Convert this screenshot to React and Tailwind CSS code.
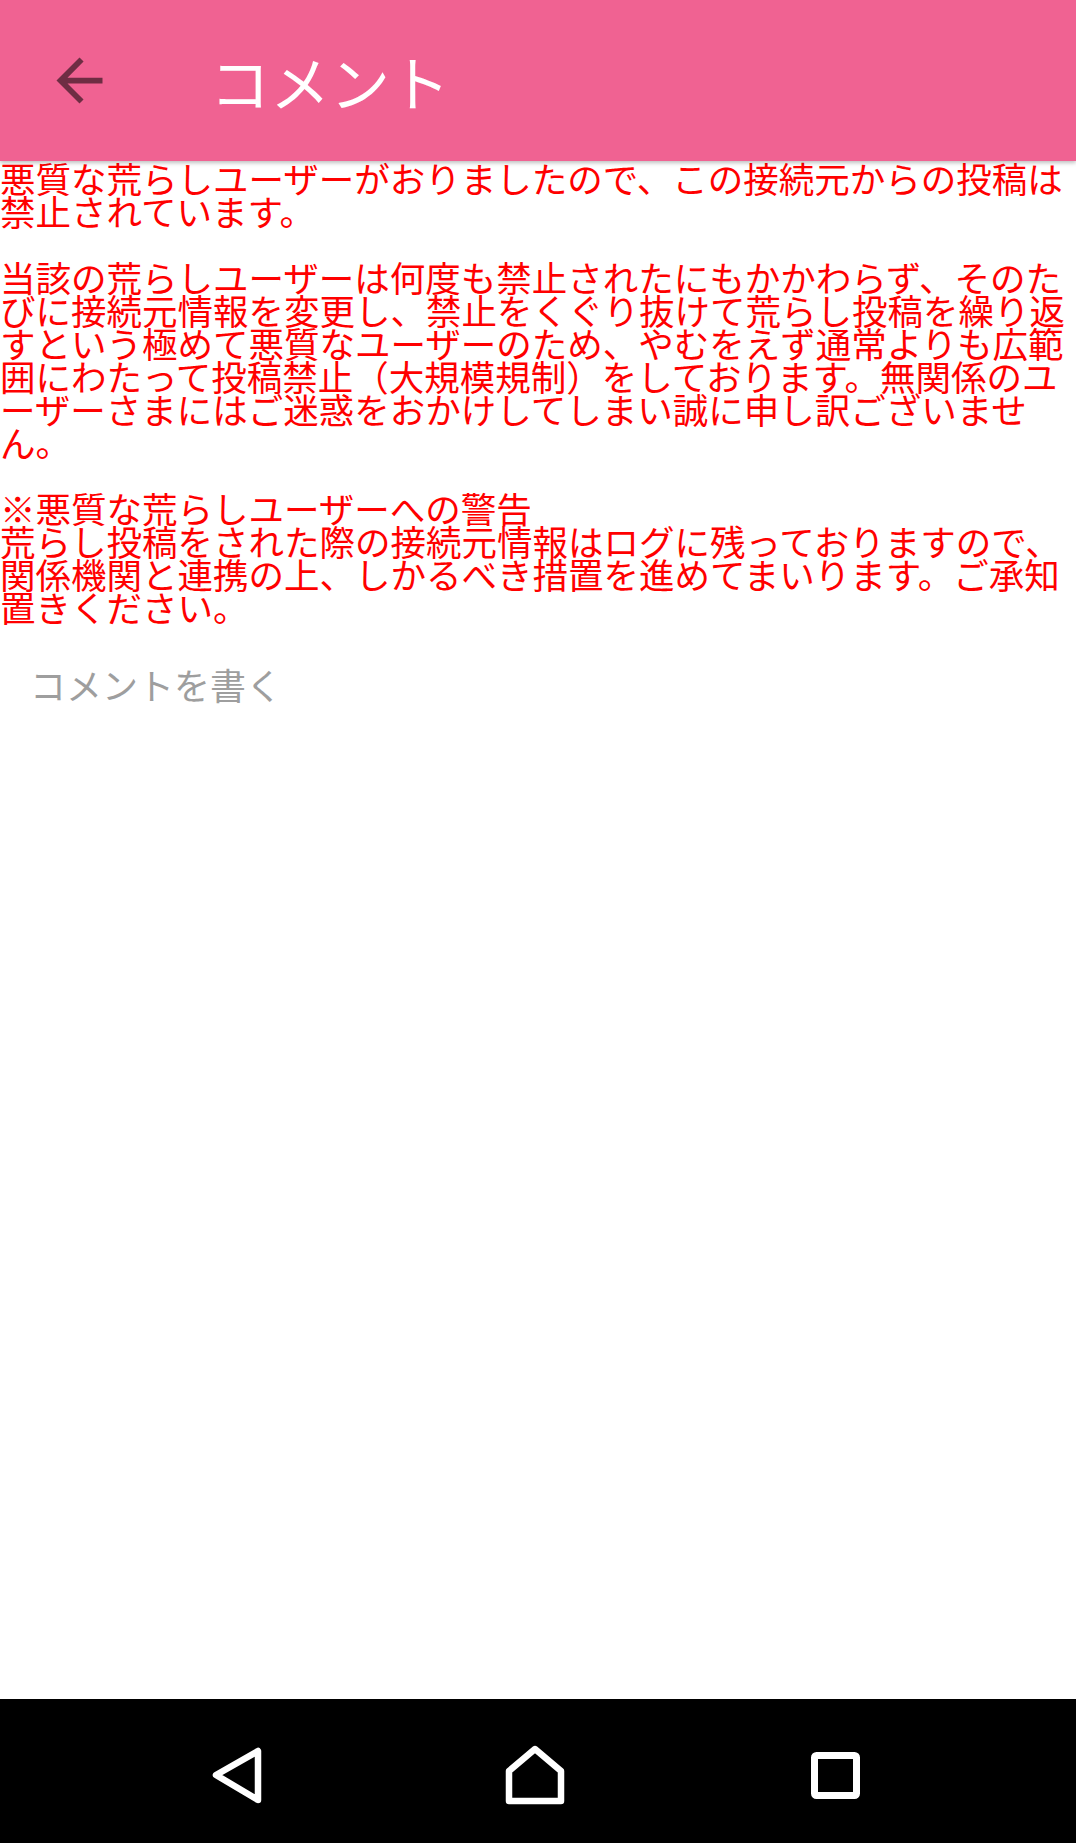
import React from "react";

const lines1 = [
  "悪質な荒らしユーザーがおりましたので、この接続元からの投稿は",
  "禁止されています。",
  "",
  "当該の荒らしユーザーは何度も禁止されたにもかかわらず、そのた",
  "びに接続元情報を変更し、禁止をくぐり抜けて荒らし投稿を繰り返",
  "すという極めて悪質なユーザーのため、やむをえず通常よりも広範",
  "囲にわたって投稿禁止（大規模規制）をしております。無関係のユ",
  "ーザーさまにはご迷惑をおかけしてしまい誠に申し訳ございませ",
  "ん。",
  "",
  "※悪質な荒らしユーザーへの警告",
  "荒らし投稿をされた際の接続元情報はログに残っておりますので、",
  "関係機関と連携の上、しかるべき措置を進めてまいります。ご承知",
  "置きください。",
];

export default function App() {
  return (
    <div
      className="w-[1076px] h-[1843px] flex flex-col bg-white overflow-hidden"
      style={{ fontFamily: '"Noto Sans CJK JP", "Noto Sans", sans-serif' }}
    >
      <header className="relative z-10 h-[161px] shrink-0 flex items-center bg-[#f06292] shadow-[0_2px_4px_rgba(0,0,0,0.25)]">
        <svg
          viewBox="0 0 24 24"
          className="ml-[45px] w-[69px] h-[69px] shrink-0"
          fill="rgba(0,0,0,0.54)"
        >
          <path d="M20 11H7.83l5.59-5.59L12 4l-8 8 8 8 1.41-1.41L7.83 13H20v-2z" />
        </svg>
        <h1 className="ml-[96px] text-white text-[60px] leading-[70px] font-normal">
          コメント
        </h1>
      </header>

      <main className="flex-1 flex flex-col">
        <div className="text-[#ff0000] text-[35.5px] leading-[33px]">
          {lines1.map((l, i) => (
            <div key={i} className="whitespace-nowrap h-[33px]">
              {l}
            </div>
          ))}
        </div>
        <div className="mt-[41px] pl-[30px] text-[36px] leading-[40px] text-[#9e9e9e]">
          コメントを書く
        </div>
      </main>

      <nav className="h-[144px] shrink-0 bg-black flex items-start pl-[181px] gap-[192px]">
        <svg width="108" height="144" viewBox="0 0 108 144" fill="none" stroke="white" strokeWidth="6.5" strokeLinejoin="round" strokeLinecap="round">
          <path d="M35 76 L77 52 L77 101 Z" />
        </svg>
        <svg width="108" height="144" viewBox="0 0 108 144" fill="none" stroke="white" strokeWidth="6.5" strokeLinejoin="round" strokeLinecap="round">
          <path d="M54 50 L80 72 L80 102 L28 102 L28 72 Z" />
        </svg>
        <svg width="108" height="144" viewBox="0 0 108 144" fill="none" stroke="white" strokeWidth="7" strokeLinejoin="round">
          <rect x="33.5" y="56.5" width="42" height="40" rx="2" />
        </svg>
      </nav>
    </div>
  );
}
